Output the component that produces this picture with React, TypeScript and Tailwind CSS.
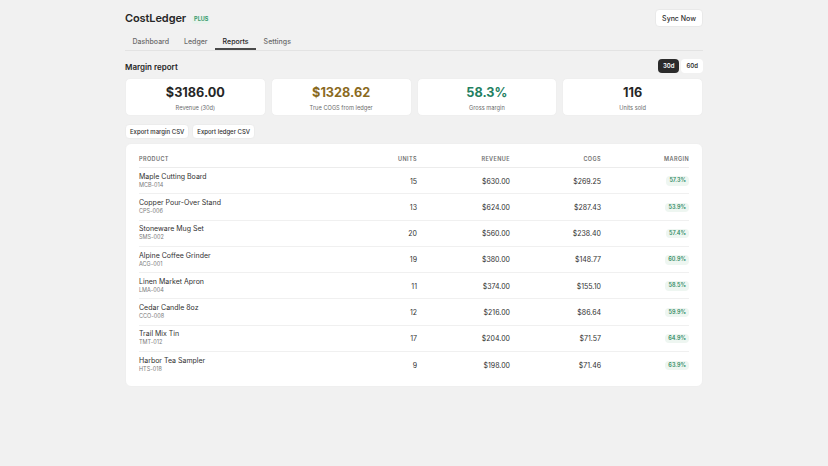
import React from "react";

const rows = [
  { name: "Maple Cutting Board", sku: "MCB-014", units: 15, revenue: "$630.00", cogs: "$269.25", margin: "57.3%" },
  { name: "Copper Pour-Over Stand", sku: "CPS-006", units: 13, revenue: "$624.00", cogs: "$287.43", margin: "53.9%" },
  { name: "Stoneware Mug Set", sku: "SMS-002", units: 20, revenue: "$560.00", cogs: "$238.40", margin: "57.4%" },
  { name: "Alpine Coffee Grinder", sku: "ACG-001", units: 19, revenue: "$380.00", cogs: "$148.77", margin: "60.9%" },
  { name: "Linen Market Apron", sku: "LMA-004", units: 11, revenue: "$374.00", cogs: "$155.10", margin: "58.5%" },
  { name: "Cedar Candle 8oz", sku: "CCO-008", units: 12, revenue: "$216.00", cogs: "$86.64", margin: "59.9%" },
  { name: "Trail Mix Tin", sku: "TMT-012", units: 17, revenue: "$204.00", cogs: "$71.57", margin: "64.9%" },
  { name: "Harbor Tea Sampler", sku: "HTS-018", units: 9, revenue: "$198.00", cogs: "$71.46", margin: "63.9%" },
];

const stats = [
  { value: "$3186.00", label: "Revenue (30d)", color: "text-[#262626]" },
  { value: "$1328.62", label: "True COGS from ledger", color: "text-[#8a6a1e]" },
  { value: "58.3%", label: "Gross margin", color: "text-[#23805f]" },
  { value: "116", label: "Units sold", color: "text-[#262626]" },
];

export default function App() {
  return (
    <div className="min-h-[466px] w-full bg-[#f1f1f1] font-['Inter',sans-serif] text-[#262626]">
      <div className="mx-auto w-[578px] pt-[9px]">
        {/* header */}
        <div className="flex h-[18px] items-center justify-between">
          <div className="flex items-end gap-[6px]">
            <span className="text-[11px] font-semibold leading-none tracking-[-0.1px] text-[#262626]">CostLedger</span>
            <span className="rounded-[2px] bg-[#e8f3ed] px-[2px] py-[1px] text-[5.5px] font-bold leading-none text-[#3d9a6e]">PLUS</span>
          </div>
          <button className="h-[18px] rounded-[4px] border border-[#e9e9e9] bg-white px-[6px] text-[7px] font-medium leading-none text-[#303030]">
            Sync Now
          </button>
        </div>

        {/* tabs */}
        <div className="mt-[7px] flex h-[17px] border-b border-[#e3e3e3]">
          {["Dashboard", "Ledger", "Reports", "Settings"].map((t) => (
            <div
              key={t}
              className={
                "flex items-center px-[7.5px] text-[7px] font-medium leading-none " +
                (t === "Reports" ? "border-b-2 border-[#4a4a4a] text-[#262626]" : "border-b-2 border-transparent text-[#6b6b6b]")
              }
            >
              <span className="mt-[1px]">{t}</span>
            </div>
          ))}
        </div>

        {/* margin report title */}
        <div className="mt-[8px] flex h-[14px] items-center justify-between">
          <span className="mt-[2px] text-[8px] font-semibold leading-none text-[#262626]">Margin report</span>
          <div className="flex gap-[2px]">
            <span className="flex h-[14px] items-center rounded-[4px] bg-[#2b2b2b] px-[5px] text-[6px] font-semibold leading-none text-white">30d</span>
            <span className="flex h-[14px] items-center rounded-[4px] bg-white px-[5px] text-[6px] font-semibold leading-none text-[#303030]">60d</span>
          </div>
        </div>

        {/* stat cards */}
        <div className="mt-[5px] grid grid-cols-4 gap-[5px]">
          {stats.map((s) => (
            <div key={s.label} className="flex h-[38px] flex-col items-center rounded-[5px] border border-[#efefef] bg-white pt-[8px]">
              <div className={"text-[12.7px] font-bold leading-none " + s.color}>{s.value}</div>
              <div className="mt-[5px] text-[5.7px] leading-none text-[#6b6b6b]">{s.label}</div>
            </div>
          ))}
        </div>

        {/* export buttons */}
        <div className="mt-[8px] flex gap-[3px]">
          {["Export margin CSV", "Export ledger CSV"].map((b) => (
            <button key={b} className="flex h-[15px] items-center rounded-[4px] border border-[#ececec] bg-white px-[4px] text-[6px] font-medium leading-none text-[#303030]">
              {b}
            </button>
          ))}
        </div>

        {/* table */}
        <div className="mt-[4px] rounded-[6px] border border-[#efefef] bg-white px-[13px] pb-[8px] pt-[8px]">
          <div className="grid h-[16px] grid-cols-[1fr_80px_93px_91px_88px] items-center border-b border-[#ececec] text-[5.5px] font-semibold leading-none tracking-[0.4px] text-[#707070]">
            <span className="mt-[1px]">PRODUCT</span>
            <span className="mt-[1px] text-right">UNITS</span>
            <span className="mt-[1px] text-right">REVENUE</span>
            <span className="mt-[1px] text-right">COGS</span>
            <span className="mt-[1px] text-right">MARGIN</span>
          </div>
          {rows.map((r, i) => (
            <div
              key={r.sku}
              className={
                "grid h-[26.25px] grid-cols-[1fr_80px_93px_91px_88px] items-center text-[7px] leading-none text-[#303030] " +
                (i < rows.length - 1 ? "border-b border-[#f0f0f0]" : "")
              }
            >
              <div className="flex flex-col">
                <span className="text-[7px] leading-none text-[#303030]">{r.name}</span>
                <span className="mt-[3px] text-[5.5px] leading-none text-[#7a7a7a]">{r.sku}</span>
              </div>
              <span className="mt-[1px] text-right">{r.units}</span>
              <span className="mt-[1px] text-right">{r.revenue}</span>
              <span className="mt-[1px] text-right">{r.cogs}</span>
              <div className="mt-[1px] flex justify-end">
                <span className="rounded-[4px] bg-[#eef6f1] px-[3px] py-[2px] text-[5.5px] font-semibold leading-none text-[#2f8a62]">
                  {r.margin}
                </span>
              </div>
            </div>
          ))}
        </div>
      </div>
    </div>
  );
}
